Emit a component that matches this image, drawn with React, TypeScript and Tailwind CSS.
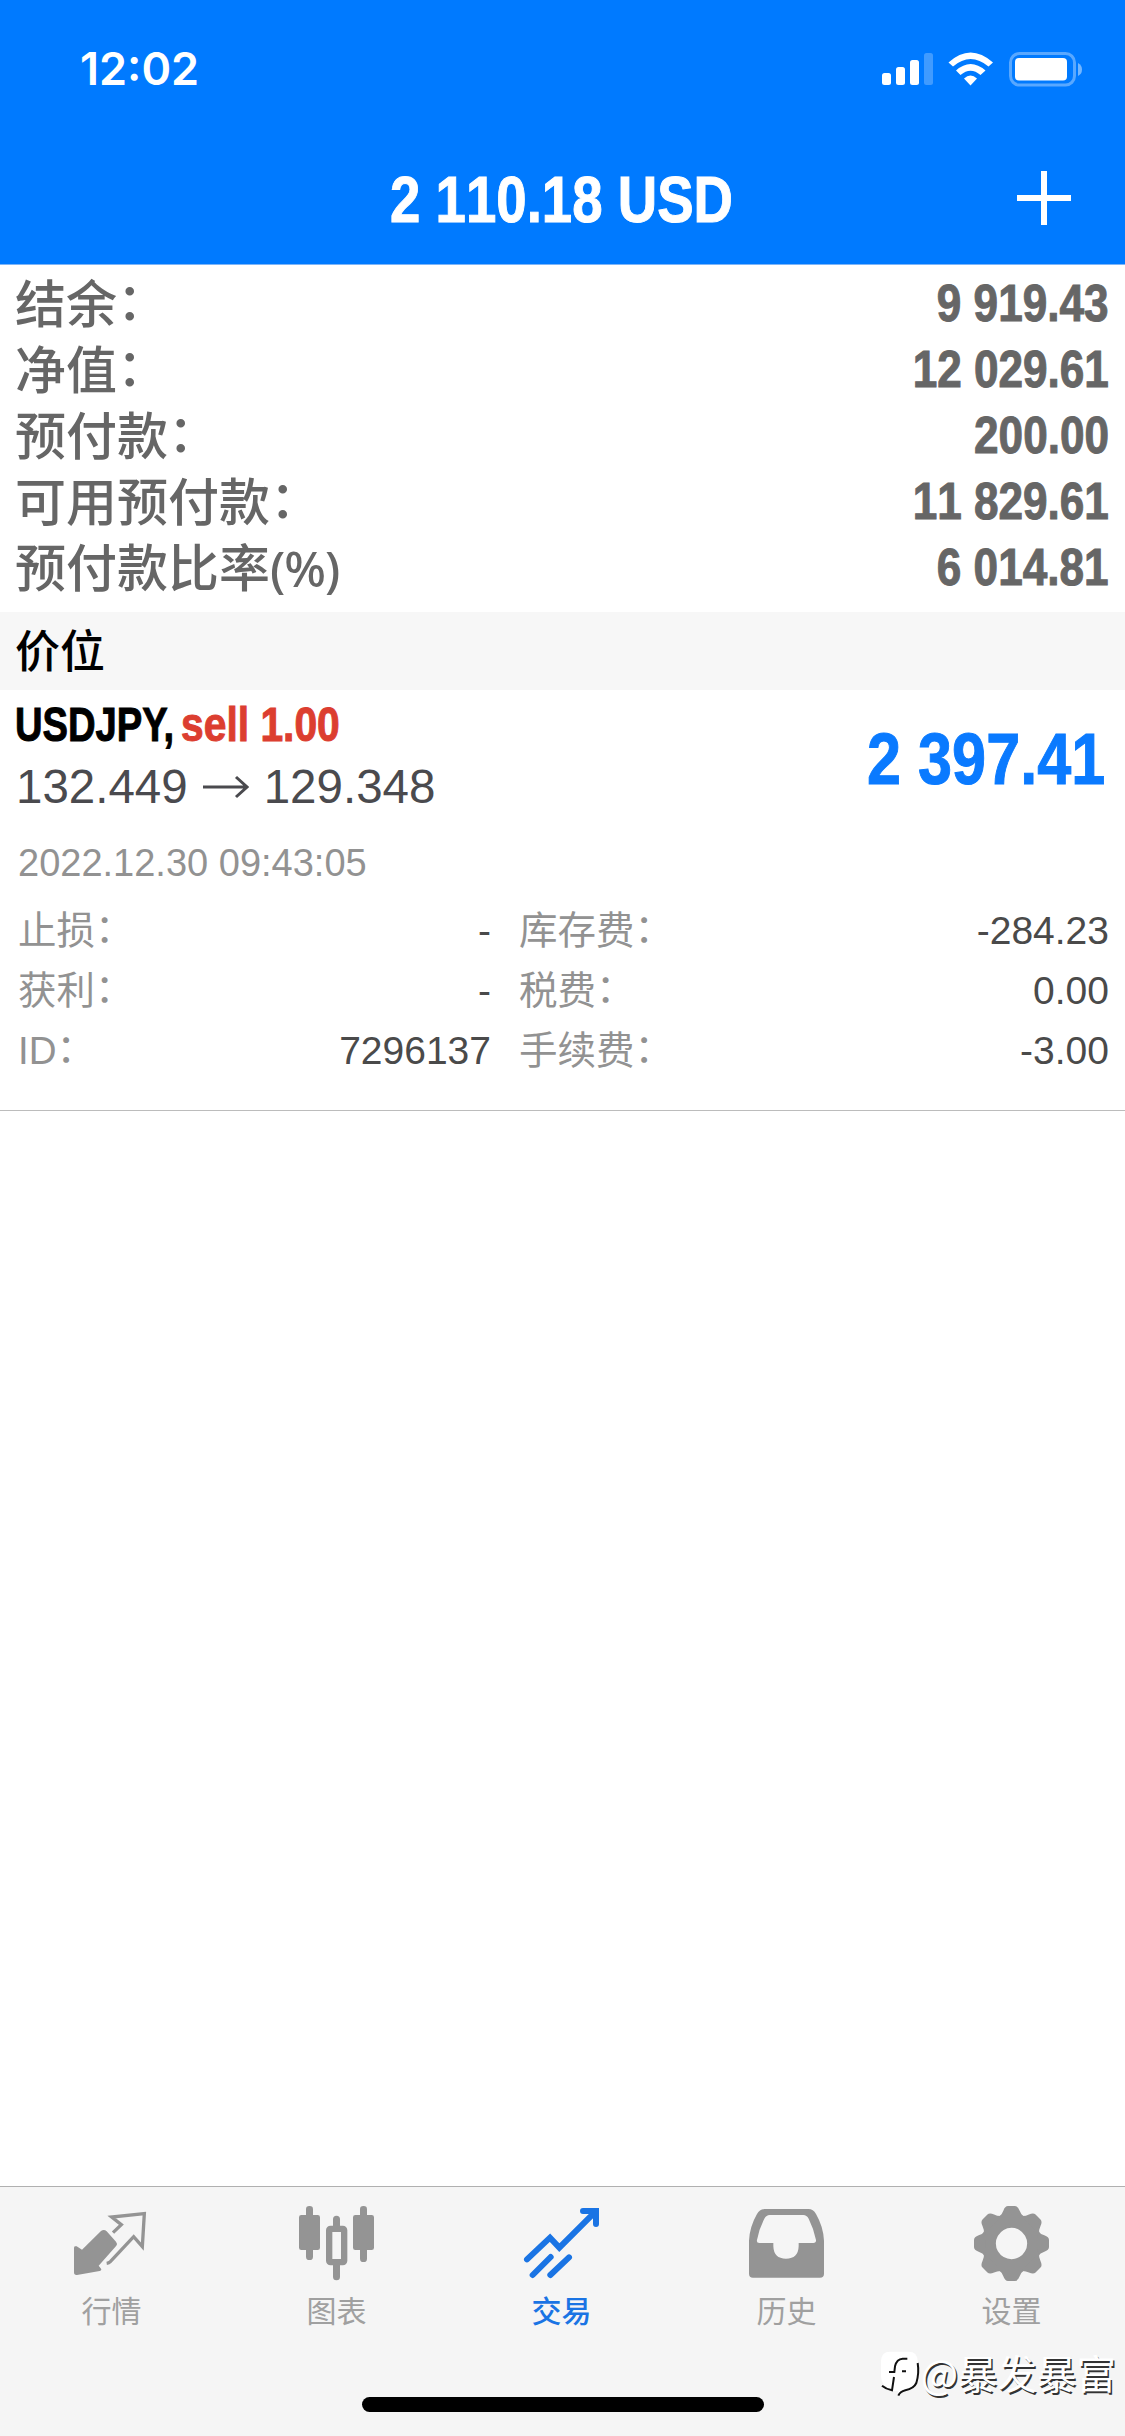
import type { ReactNode } from 'react'

const SANS = "font-['Liberation_Sans','Noto_Sans_CJK_SC',sans-serif]"
// 窄体粗字：横向压缩得到
const NARROW = 'inline-block whitespace-nowrap font-bold [-webkit-text-stroke:1px_currentColor]'

const summary = [
  { label: '结余', colon: true, value: '9 919.43' },
  { label: '净值', colon: true, value: '12 029.61' },
  { label: '预付款', colon: true, value: '200.00' },
  { label: '可用预付款', colon: true, value: '11 829.61' },
  { label: '预付款比率', unit: '(%)', value: '6 014.81' },
]

const details = [
  { label: '止损', value: '-', label2: '库存费', value2: '-284.23' },
  { label: '获利', value: '-', label2: '税费', value2: '0.00' },
  { label: 'ID', value: '7296137', label2: '手续费', value2: '-3.00' },
]

function StatusBar() {
  return (
    <div className="flex h-[132px] items-start justify-between pl-[80px] pr-[43px] pt-[44px]">
      <span className="font-['Inter',sans-serif] text-[45px] font-semibold leading-[50px]">12:02</span>
      <svg className="mt-[6px]" width="202" height="38" viewBox="880 50 202 38" fill="currentColor">
        <rect x="882" y="73" width="9" height="12" rx="2.5" />
        <rect x="896" y="67" width="9" height="18" rx="2.5" />
        <rect x="910" y="60" width="9" height="25" rx="2.5" />
        <rect x="924" y="53" width="9" height="32" rx="2.5" opacity="0.25" />
        <path d="M948.500 62.500 Q970.500 42.500 993 62.500 L988.500 66.500 Q970.500 51.500 953 66.500 Z" />
        <path d="M956 70.500 Q970.500 57.500 985.500 70.500 L980.500 75 Q970.500 66.500 960.500 75 Z" />
        <path d="M964 78.500 Q970.500 72.500 977 78.500 L970.500 85.500 Z" />
        <rect x="1010.500" y="53.500" width="64" height="31.500" rx="9" fill="none" stroke="currentColor" strokeWidth="3" opacity="0.35" />
        <rect x="1015" y="58" width="52" height="22.500" rx="4" />
        <path d="M1078 63 Q1082 65 1082 69.500 Q1082 74 1078 76 Z" opacity="0.45" />
      </svg>
    </div>
  )
}

// 全角冒号，略微上移到行中
function Colon() {
  return <span className="relative -top-[0.05em]">：</span>
}

function SummaryRow({ label, colon, unit, value }: { label: string; colon?: boolean; unit?: string; value: string }) {
  return (
    <div className="flex h-[66px] items-center justify-between">
      <span className="-ml-px pt-[3px] text-[51px] font-medium leading-[66px]">
        {label}
        {colon && <Colon />}
        {unit && (
          <span className="font-['Noto_Sans',sans-serif] text-[49px] font-medium leading-none tracking-[-0.02em]">
            {unit}
          </span>
        )}
      </span>
      <span className={`${NARROW} origin-right scale-x-[0.865] text-[51px] leading-[66px] [font-kerning:none]`}>
        {value}
      </span>
    </div>
  )
}

function DetailCell({ label, value }: { label: string; value: string }) {
  return (
    <div className="flex items-center justify-between">
      <span className="text-[#929292]">
        {label}
        <Colon />
      </span>
      <span className="text-[39px] text-[#4a4a4a]">{value}</span>
    </div>
  )
}

function Tab({ label, active, children }: { label: string; active?: boolean; children: ReactNode }) {
  return (
    <div className={`flex flex-col items-center ${active ? 'text-[#1a74e4]' : 'text-[#949494]'}`}>
      <svg width="75" height="75" viewBox="0 0 225 225" fill="currentColor" className="overflow-visible">
        {children}
      </svg>
      <span className={`mt-[9px] text-[30px] leading-[44px] ${active ? 'font-medium' : 'font-normal text-[#a0a0a0]'}`}>
        {label}
      </span>
    </div>
  )
}

function GearShape() {
  return (
    <>
      <path
        fillRule="evenodd"
        d="M112.500 22.500 a90 90 0 1 0 0.010 0 Z M112.500 65.500 a47 47 0 1 1 -0.010 0 Z"
      />
      {[0, 45, 90, 135, 180, 225, 270, 315].map((deg) => (
        <path
          key={deg}
          transform={`rotate(${deg} 112.500 112.500)`}
          d="M74 34 Q84 26 88 14 Q93 0 102 0 H123 Q132 0 137 14 Q141 26 151 34 Z"
        />
      ))}
    </>
  )
}

export default function App() {
  return (
    <div className={`${SANS} flex h-[2436px] w-[1125px] flex-col overflow-hidden bg-white`}>
      <header className="h-[265px] flex-none border-b border-[#7db5f8] bg-[#007aff] text-white">
        <StatusBar />
        <div className="grid h-[132px] grid-cols-[54px_1fr_54px] items-center pl-[52px] pr-[54px]">
          <span />
          <h1 className={`${NARROW} scale-x-[0.84] pt-[3px] text-center text-[65px] leading-[80px] [font-kerning:none]`}>
            2 110.18 USD
          </h1>
          <svg width="54" height="54" viewBox="0 0 54 54" stroke="currentColor" strokeWidth="6">
            <path d="M27 0V54M0 27H54" />
          </svg>
        </div>
      </header>

      {/* 账户概况 */}
      <section className="h-[347px] flex-none px-[16px] pt-[6px] text-[#666666]">
        {summary.map((row) => (
          <SummaryRow key={row.label} {...row} />
        ))}
      </section>

      <div className="h-[78px] flex-none bg-[#f7f7f7] px-[15px] pt-[2px] text-[45px] font-medium leading-[78px] text-black">
        价位
      </div>

      {/* 持仓 */}
      <section className="h-[421px] flex-none border-b border-[#bcbcbc] pl-[18px] pr-[16px] pt-[4px]">
        <div className="flex items-center justify-between">
          <div>
            <div className="-ml-[3px] flex text-[48px] leading-[62px]">
              <span className="w-[166px]">
                <span className={`${NARROW} origin-left scale-x-[0.795] text-black`}>USDJPY,</span>
              </span>
              <span className={`${NARROW} origin-left scale-x-[0.85] text-[#dc3e30]`}>sell 1.00</span>
            </div>
            <div className="-ml-[2px] flex items-center text-[47.500px] leading-[62px] text-[#4a4a4e]">
              <span>132.449</span>
              <svg className="mx-[15px]" width="46" height="24" viewBox="0 0 46 24" fill="none" stroke="currentColor" strokeWidth="3">
                <path d="M0 12H44M33 2L44 12L33 22" />
              </svg>
              <span>129.348</span>
            </div>
          </div>
          <span className={`${NARROW} mr-[4px] origin-right scale-x-[0.85] pt-[5px] text-[72px] leading-[80px] text-[#0a7aff]`}>
            2 397.41
          </span>
        </div>
        <div className="mt-[21px] text-[38px] leading-[48px] text-[#929292]">2022.12.30 09:43:05</div>
        <div className="mt-[14px] text-[38.500px] leading-[60px]">
          {details.map((row) => (
            <div key={row.label} className="grid h-[60px] grid-cols-[473px_1fr] gap-x-[28px]">
              <DetailCell label={row.label} value={row.value} />
              <DetailCell label={row.label2} value={row.value2} />
            </div>
          ))}
        </div>
      </section>

      <main className="flex-1" />

      <footer className="relative h-[250px] flex-none border-t border-[#b0b0b0] bg-[#f5f5f5] pt-[19px]">
        <nav className="-ml-px grid w-[1125px] grid-cols-5">
          <Tab label="行情">
            <path d="M3 121 Q0 121 0 126 V199 Q0 208 9 207 L77 195 Q85 193 80 187 L74 179 L127 119 Q131 113 126 107 L98 76 Q90 68 81 75 L24 131 L8 121 Z" />
            <path d="M117 80 L142 56 L113 33 L211 23 L205 122 L179 92 L109 167 Q105 171 98 172" fill="none" stroke="currentColor" strokeWidth="10" />
          </Tab>
          <Tab label="图表">
            <rect x="0" y="27" width="63" height="105" rx="7" />
            <rect x="21" y="0" width="21" height="162" rx="10" />
            <rect x="162" y="27" width="63" height="105" rx="7" />
            <rect x="183" y="0" width="21" height="168" rx="10" />
            <path d="M102 60V40A10.500 10.500 0 0 1 123 40V60ZM102 177V212A10.500 10.500 0 0 0 123 212V177Z" />
            <rect x="90.500" y="68.500" width="45" height="100" rx="4" fill="none" stroke="currentColor" strokeWidth="19" />
          </Tab>
          <Tab label="交易" active>
            <g fill="none" stroke="currentColor" strokeWidth="18" strokeLinecap="round">
              <path d="M9 160L78 95L106 125L212 19" />
              <path d="M177 15H216V54" />
              <path d="M26 207L80 153M79 207L135 154" />
            </g>
          </Tab>
          <Tab label="历史">
            <path
              fillRule="evenodd"
              d="M0 104 Q2 62 24 24 Q32 9 47 9 H178 Q193 9 201 24 Q223 62 225 104 V203 Q225 215 213 215 H12 Q0 215 0 203 Z M24 102 Q30 70 46 38 Q52 27 62 27 H163 Q173 27 179 38 Q195 70 201 102 Q202 111 193 111 H149 V120 Q148 158 111 158 Q74 158 73 120 V111 H31 Q22 111 24 102 Z"
            />
          </Tab>
          <Tab label="设置">
            <GearShape />
          </Tab>
        </nav>

        {/* 水印 */}
        <div className="absolute right-[9px] top-[159px] flex items-center text-white">
          <svg width="39" height="46" viewBox="0 0 117 138" className="mt-[5px] overflow-visible">
            <path d="M30 2H85Q113 2 113 30V80Q110 112 80 118Q62 122 56 134L54 120H36Q4 104 3 78V30Q4 2 30 2Z" fill="#fff" />
            <path
              d="M82 23H68Q50 24 45 46L43 63H27M66 61H78M42 78L36 118Q18 114 6 104M113 36Q118 66 109 96Q102 112 76 118Q60 122 55 134"
              fill="none"
              stroke="#111"
              strokeWidth="6"
            />
          </svg>
          <span className="ml-[2px] font-['Noto_Sans_CJK_SC',sans-serif] text-[39.500px] leading-[48px] [text-shadow:1.5px_1.5px_0_#333]">
            @暴发暴富
          </span>
        </div>

        {/* Home 指示条 */}
        <div className="absolute left-[362px] top-[210px] h-[15px] w-[402px] rounded-full bg-black" />
      </footer>
    </div>
  )
}
